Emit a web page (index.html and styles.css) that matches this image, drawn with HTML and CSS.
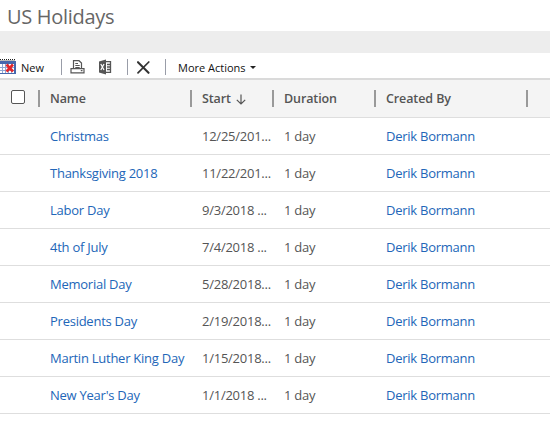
FILE: index.html
```html
<!DOCTYPE html>
<html lang="en">
<head>
<meta charset="utf-8">
<title>US Holidays</title>
<link rel="stylesheet" href="styles.css">
</head>
<body>
<h1 class="title">US Holidays</h1>
<div class="band"></div>
<div class="toolbar">
  <svg class="icon-new" width="16" height="16" viewBox="0 0 16 16">
    <path d="M0 .5H15" stroke="#222" stroke-dasharray="1 1"/>
    <path d="M0 1.5H15" stroke="#bbb"/>
    <path fill="#4668ad" d="M0 2h16v13H0z"/>
    <path fill="#fff" d="M0 5h14v9H0z"/>
    <path d="M0 8.5H14M0 11.5H14M2.500 5V14M5.500 5V14M8.500 5V14M11.500 5V14" stroke="#8fa7d3"/>
    <path d="M6.500 5.500L13 12.500M13 5.500L6.500 12.500" stroke="#e3262b" stroke-width="2.600"/>
  </svg>
  <span class="label-new">New</span>
  <span class="sep sep-one"></span>
  <svg class="icon-print" width="15" height="14" viewBox="0 0 15 14" fill="none" stroke="#555" stroke-width="1.200">
    <path d="M3.500 8.500V.7H9L11.500 3V8.500M1 8.600H14V12.800H1zM5.300 3.500H8M5.300 5.500H9.700M5.300 7.500H9.700M10.800 10.700H12.500"/>
  </svg>
  <svg class="icon-excel" width="13" height="16" viewBox="0 0 13 16">
    <path fill="#555" d="M0 2.500L7 .5V15.500L0 13.500z"/>
    <path d="M1.800 5L5 11M5 5L1.800 11" stroke="#fff" stroke-width="1.200"/>
    <path d="M7 2.600H11.500V13.400H7M8 5.500H11M8 8H11M8 10.500H11" fill="none" stroke="#555" stroke-width="1.300"/>
  </svg>
  <span class="sep sep-two"></span>
  <svg class="icon-delete" width="13" height="13" viewBox="0 0 13 13" fill="none" stroke="#333" stroke-linecap="round">
    <path d="M1 1.200L11.500 11.800" stroke-width="2.100"/>
    <path d="M11.800 1L1 11.800" stroke-width="1.700"/>
  </svg>
  <span class="sep sep-three"></span>
  <span class="label-more">More Actions</span>
  <svg class="caret" width="6" height="3" viewBox="0 0 6 3"><path fill="#222" d="M0 0H6L3 3z"/></svg>
</div>
<div class="grid">
  <div class="row head">
    <span class="check"></span>
    <span class="cell">Name</span>
    <span class="cell">Start<svg class="arrow" width="10" height="11" viewBox="0 0 10 11" fill="none" stroke="#555" stroke-width="1.200"><path d="M5 .5V10M.8 5.800L5 10L9.200 5.800"/></svg></span>
    <span class="cell">Duration</span>
    <span class="cell">Created By</span>
    <span class="cell"></span>
  </div>
  <div class="row"><span></span><a class="link">Christmas</a><span class="date">12/25/201...</span><span class="duration">1 day</span><a class="link">Derik Bormann</a></div>
  <div class="row"><span></span><a class="link">Thanksgiving 2018</a><span class="date">11/22/201...</span><span class="duration">1 day</span><a class="link">Derik Bormann</a></div>
  <div class="row"><span></span><a class="link">Labor Day</a><span class="date">9/3/2018 ...</span><span class="duration">1 day</span><a class="link">Derik Bormann</a></div>
  <div class="row"><span></span><a class="link">4th of July</a><span class="date">7/4/2018 ...</span><span class="duration">1 day</span><a class="link">Derik Bormann</a></div>
  <div class="row"><span></span><a class="link">Memorial Day</a><span class="date">5/28/2018...</span><span class="duration">1 day</span><a class="link">Derik Bormann</a></div>
  <div class="row"><span></span><a class="link">Presidents Day</a><span class="date">2/19/2018...</span><span class="duration">1 day</span><a class="link">Derik Bormann</a></div>
  <div class="row"><span></span><a class="link">Martin Luther King Day</a><span class="date">1/15/2018...</span><span class="duration">1 day</span><a class="link">Derik Bormann</a></div>
  <div class="row"><span></span><a class="link">New Year's Day</a><span class="date">1/1/2018 ...</span><span class="duration">1 day</span><a class="link">Derik Bormann</a></div>
</div>
</body>
</html>
```
FILE: styles.css
```css
* { box-sizing: border-box; }
body {
  margin: 0;
  background: #fff;
  font: 13px "Open Sans", "Noto Sans", sans-serif;
  color: #555;
  overflow: hidden;
}
.title {
  margin: 0;
  height: 31px;
  padding: 3px 0 0 7px;
  font-size: 20px;
  line-height: 28px;
  font-weight: 400;
  letter-spacing: -0.3px;
  color: #666;
}
.band { height: 22px; background: #ededed; }
.toolbar {
  display: flex;
  align-items: center;
  height: 25px;
  padding-top: 3px;
  font-size: 11px;
  color: #111;
  white-space: nowrap;
}
.toolbar svg, .sep { flex: none; }
.label-new { width: 40px; margin-left: 5px; }
.sep { width: 1px; height: 16px; background: #999da8; }
.icon-print { margin-left: 8px; }
.icon-excel { margin-left: 14px; }
.sep-two { margin-left: 15px; }
.icon-delete { margin-left: 9px; }
.sep-three { margin-left: 15px; }
.label-more { width: 66px; margin-left: 12px; }
.caret { margin-left: 6px; }
.row {
  display: grid;
  grid-template-columns: 38px 152px 82px 102px 152px 1fr;
  align-items: center;
  height: 37px;
  border-bottom: 1px solid #dedede;
  white-space: nowrap;
  letter-spacing: -0.25px;
}
.row > :not(:first-child) { padding-left: 12px; }
.head {
  height: 40px;
  background: #f4f4f4;
  border-top: 2px solid #dadada;
  font-weight: 600;
  font-size: 12.5px;
  letter-spacing: -0.1px;
}
.check {
  width: 14px;
  height: 14px;
  margin: -3px 0 0 11px;
  border: 1px solid #555;
  border-radius: 2px;
  background: #fff;
}
.cell {
  display: flex;
  align-items: center;
  height: 17px;
  border-left: 2px solid #999;
}
.row > .cell { padding-left: 10px; }
.arrow { margin: 1px 0 0 5px; }
.link { color: #2266b8; }
```
